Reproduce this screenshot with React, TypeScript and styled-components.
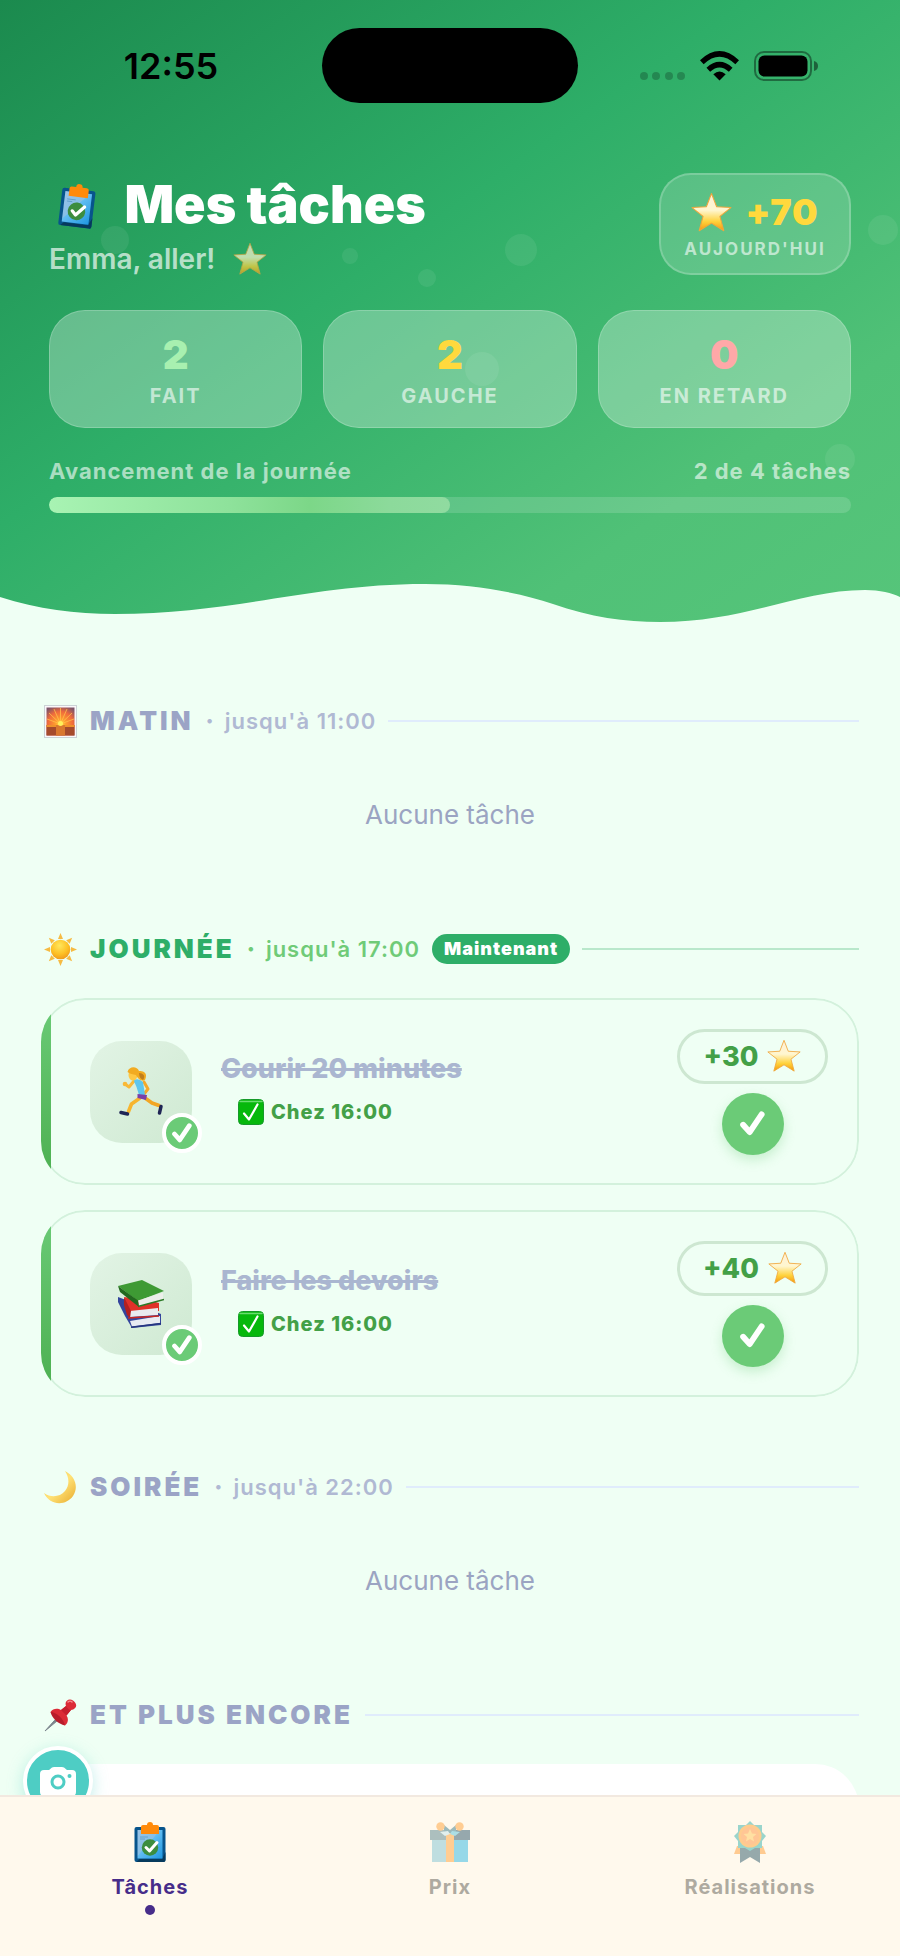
import React from "react";
import styled, { createGlobalStyle } from "styled-components";

const GlobalStyle = createGlobalStyle`
  * { box-sizing: border-box; }
  body { margin: 0; background: #effff4; font-family: Inter, "Liberation Sans", sans-serif; }
  button { font: inherit; border: 0; padding: 0; background: none; cursor: pointer; }
  h1, h2, h3, p { margin: 0; }
  svg { display: block; flex: none; }
`;

/* ---------- layout ---------- */

const Screen = styled.div`
  height: 100vh;
  display: flex;
  flex-direction: column;
  background: #effff4;
`;

const Viewport = styled.div`
  position: relative;
  flex: 1;
  min-height: 0;
  overflow: hidden;
`;

const Scroll = styled.div`
  height: 100%;
  overflow-y: auto;
  scrollbar-width: none;
`;

const Header = styled.header`
  position: relative;
  background: linear-gradient(145deg, #1b8a4e 0%, #2eae68 42%, #50c177 78%, #56c57a 100%);
`;

const Bubble = styled.span<{ $x: number; $y: number; $r: number }>`
  position: absolute;
  left: ${(p) => p.$x / 9}%;
  top: ${(p) => p.$y - p.$r}px;
  width: ${(p) => p.$r * 2}px;
  height: ${(p) => p.$r * 2}px;
  margin-left: ${(p) => -p.$r}px;
  border-radius: 50%;
  background: rgba(255, 255, 255, 0.07);
`;

const StatusBar = styled.div`
  display: grid;
  grid-template-columns: 1fr 256px 1fr;
  align-items: center;
  justify-items: center;
  padding: 28px 20px 0;
`;

const Clock = styled.time`
  font-size: 36px;
  line-height: 40px;
  font-weight: 600;
  color: #000;
`;

const Island = styled.div`
  width: 256px;
  height: 75px;
  border-radius: 38px;
  background: #000;
`;

const StatusIcons = styled.div`
  display: flex;
  align-items: center;
  gap: 15px;
`;

const HeaderBody = styled.div`
  position: relative;
  padding: 70px 49px 69px;
`;

const TitleRow = styled.div`
  display: flex;
  justify-content: space-between;
  align-items: flex-start;
  margin-bottom: 29px;
`;

const Title = styled.h1`
  display: flex;
  align-items: center;
  gap: 30px;
  padding-left: 11px;
  font-size: 52px;
  line-height: 64px;
  font-weight: 900;
  color: #fff;
`;

const Greeting = styled.p`
  display: flex;
  align-items: center;
  gap: 18px;
  font-size: 28px;
  line-height: 44px;
  font-weight: 600;
  color: rgba(255, 255, 255, 0.68);
`;

const Faded = styled.span<{ $opacity: number }>`
  display: flex;
  opacity: ${(p) => p.$opacity};
`;

const TodayBadge = styled.div`
  min-width: 192px;
  padding: 16px 16px 8px;
  border: 2px solid rgba(255, 255, 255, 0.2);
  border-radius: 32px;
  background: rgba(255, 255, 255, 0.17);
  text-align: center;
`;

const TodayPoints = styled.div`
  display: flex;
  align-items: center;
  justify-content: center;
  gap: 13px;
  font-size: 36px;
  line-height: 42px;
  font-weight: 900;
  letter-spacing: 1px;
  color: #ffd93d;
`;

const TodayLabel = styled.div`
  font-size: 17px;
  line-height: 32px;
  font-weight: 700;
  letter-spacing: 2px;
  text-transform: uppercase;
  color: rgba(255, 255, 255, 0.6);
`;

const Stats = styled.div`
  display: grid;
  grid-template-columns: repeat(3, 1fr);
  gap: 21px;
  margin-bottom: 28px;
`;

const Stat = styled.div`
  padding: 20px 8px 14px;
  border: 1px solid rgba(255, 255, 255, 0.2);
  border-radius: 36px;
  background: rgba(255, 255, 255, 0.29);
  text-align: center;
`;

const StatValue = styled.div<{ $color: string }>`
  font-size: 40px;
  line-height: 48px;
  font-weight: 900;
  color: ${(p) => p.$color};
`;

const StatLabel = styled.div`
  font-size: 20px;
  line-height: 34px;
  font-weight: 700;
  letter-spacing: 2px;
  text-transform: uppercase;
  color: rgba(255, 255, 255, 0.6);
`;

const ProgressText = styled.div`
  display: flex;
  justify-content: space-between;
  margin-bottom: 11px;
  font-size: 22px;
  line-height: 30px;
  font-weight: 700;
  letter-spacing: 1px;
  color: rgba(255, 255, 255, 0.6);
`;

const Track = styled.div`
  height: 16px;
  border-radius: 8px;
  background: rgba(255, 255, 255, 0.15);
  overflow: hidden;
`;

const Fill = styled.div`
  height: 100%;
  border-radius: 8px;
  background: linear-gradient(90deg, #a8f3b3 0%, #8ee29b 45%, #7cd788 65%, #8cda9b 85%, #90dba0 100%);
`;

const Wave = styled.svg`
  position: relative;
  width: 100%;
  height: 40px;
`;

const Main = styled.main`
  display: flex;
  flex-direction: column;
  gap: 70px;
  padding: 79px 41px 70px;
`;

const SectionHead = styled.div<{ $active?: boolean }>`
  display: flex;
  align-items: center;
  height: 40px;
  margin-bottom: 29px;
  color: ${(p) => (p.$active ? "#2eae68" : "#9ba4c6")};
  &::after {
    content: "";
    flex: 1;
    height: 2px;
    margin-left: 12px;
    background: ${(p) => (p.$active ? "#b9e8cb" : "#e0ecfc")};
  }
`;

const SectionIcon = styled.span`
  display: flex;
  justify-content: center;
  width: 38px;
  margin-right: 11px;
`;

const SectionTitle = styled.h2`
  font-size: 26px;
  line-height: 40px;
  font-weight: 900;
  letter-spacing: 3px;
  text-transform: uppercase;
`;

const Until = styled.span<{ $active?: boolean }>`
  display: flex;
  gap: 10px;
  margin-left: 12px;
  font-size: 22px;
  line-height: 40px;
  font-weight: 600;
  letter-spacing: 1px;
  color: ${(p) => (p.$active ? "#6fcb78" : "#b0b9d3")};
  &::before {
    content: "·";
    font-weight: 900;
  }
`;

const NowPill = styled.span`
  margin-left: 12px;
  padding: 0 12px;
  border-radius: 15px;
  background: #2eae68;
  color: #fff;
  font-size: 18px;
  line-height: 30px;
  font-weight: 900;
  letter-spacing: 1px;
`;

const Empty = styled.p`
  padding: 29px 0 28px;
  font-size: 26px;
  line-height: 32px;
  text-align: center;
  color: #9ba4c2;
`;

const Cards = styled.div`
  display: flex;
  flex-direction: column;
  gap: 25px;
`;

const Card = styled.article`
  position: relative;
  display: flex;
  align-items: center;
  min-height: 187px;
  padding: 29px 31px 29px 49px;
  border-radius: 44px;
  overflow: hidden;
  &::before {
    content: "";
    position: absolute;
    inset: 0;
    border: 2px solid #d3f1dc;
    border-radius: 44px;
    pointer-events: none;
  }
  &::after {
    content: "";
    position: absolute;
    inset: 0 auto 0 0;
    width: 10px;
    background: linear-gradient(#6bcb77, #4caf50);
  }
`;

const BlankCard = styled.div`
  min-height: 187px;
  border-radius: 44px;
  background: #fff;
`;

const Tile = styled.div`
  position: relative;
  display: flex;
  align-items: center;
  justify-content: center;
  width: 102px;
  height: 102px;
  margin-right: 29px;
  border-radius: 32px;
  background: linear-gradient(135deg, #e2f4e5, #cfe9d2);
`;

const DoneDot = styled.span`
  position: absolute;
  right: -10px;
  bottom: -10px;
  display: flex;
  align-items: center;
  justify-content: center;
  width: 40px;
  height: 40px;
  border: 4px solid #fff;
  border-radius: 50%;
  background: #6bcb77;
`;

const CardText = styled.div`
  flex: 1;
`;

const TaskTitle = styled.h3`
  font-size: 27px;
  line-height: 40px;
  font-weight: 800;
  color: #aab6d0;
  text-decoration: line-through;
  text-decoration-thickness: 3px;
`;

const TaskTime = styled.p`
  display: flex;
  align-items: center;
  gap: 7px;
  padding-left: 17px;
  font-size: 20px;
  line-height: 46px;
  font-weight: 800;
  letter-spacing: 1px;
  color: #43a047;
`;

const CardSide = styled.div`
  display: flex;
  flex-direction: column;
  align-items: center;
  gap: 9px;
`;

const Points = styled.div`
  display: flex;
  align-items: center;
  justify-content: center;
  gap: 9px;
  min-width: 151px;
  height: 55px;
  border: 3px solid #cde7d1;
  border-radius: 28px;
  font-size: 27px;
  font-weight: 800;
  color: #43a047;
`;

const CheckButton = styled.button`
  display: flex;
  align-items: center;
  justify-content: center;
  width: 62px;
  height: 62px;
  border-radius: 50%;
  background: #6bcb77;
  box-shadow: 0 5px 12px rgba(107, 203, 119, 0.3);
`;

const CameraButton = styled.button`
  position: absolute;
  left: 23px;
  bottom: -21px;
  display: flex;
  align-items: center;
  justify-content: center;
  width: 70px;
  height: 70px;
  && { border: 4px solid #fff; }
  border-radius: 50%;
  background: #4ecdc4;
  box-shadow: 0 4px 16px rgba(78, 205, 196, 0.35);
`;

const TabBar = styled.nav`
  display: grid;
  grid-template-columns: repeat(3, 1fr);
  border-top: 2px solid #f2e9e0;
  background: #fff9ed;
`;

const Tab = styled.button<{ $active?: boolean }>`
  display: flex;
  flex-direction: column;
  align-items: center;
  && { padding: 22px 0 41px; }
  font-size: 20px;
  line-height: 28px;
  font-weight: 700;
  letter-spacing: 1px;
  color: ${(p) => (p.$active ? "#472d8a" : "#aeaaa0")};
  &::after {
    content: "";
    width: 10px;
    height: 10px;
    margin-top: 4px;
    border-radius: 50%;
    background: ${(p) => (p.$active ? "#472d8a" : "transparent")};
  }
`;

const TabIcon = styled.span<{ $active?: boolean }>`
  display: flex;
  align-items: center;
  height: 46px;
  margin-bottom: 8px;
  opacity: ${(p) => (p.$active ? 1 : 0.5)};
`;

/* ---------- drawings ---------- */

const StarIcon = ({ size, id }: { size: number; id: string }) => (
  <svg width={size} height={size} viewBox="0 0 40 40" aria-hidden="true">
    <defs>
      <linearGradient id={id} x1="0" y1="0" x2="0" y2="1">
        <stop offset="0" stopColor="#fff0d8" />
        <stop offset="0.45" stopColor="#fff6cf" />
        <stop offset="0.75" stopColor="#ffd23c" />
        <stop offset="1" stopColor="#f59a0c" />
      </linearGradient>
    </defs>
    <path
      d="M20 1.5 25 14.4 39 15.2 28.2 23.8 32 37.8 20 30.4 8 37.8 11.8 23.8 1 15.2 15 14.4Z"
      fill={`url(#${id})`}
      stroke="#f0a63c"
      strokeWidth="1"
      strokeLinejoin="round"
    />
  </svg>
);

const ClipboardIcon = ({ id, height, tilt = 0 }: { id: string; height: number; tilt?: number }) => (
  <svg width={height * 0.8} height={height} viewBox="0 0 32 40" overflow="visible" aria-hidden="true">
    <defs>
      <linearGradient id={id} x1="0" y1="0" x2="1" y2="1">
        <stop offset="0" stopColor="#9cc4e6" />
        <stop offset="0.45" stopColor="#86bfe8" />
        <stop offset="0.46" stopColor="#62bdf2" />
        <stop offset="1" stopColor="#1f97e0" />
      </linearGradient>
    </defs>
    <g transform={`rotate(${tilt} 16 20)`}>
      <rect x="0.5" y="5" width="31" height="35" rx="2" fill="#07548c" />
      <path d="M31.5 30v8a2 2 0 0 1-2 2H2.5l3-3H28Z" fill="#063a5c" />
      <path d="M3.500 8H28.500V36.500H3.500Z" fill={`url(#${id})`} />
      <path d="M6 15h8M6 17h5" stroke="#5b9cc9" strokeWidth="0.8" />
      <path d="M7 12V5a2 2 0 0 1 2-2h4a3 3 0 0 1 6 0h4a2 2 0 0 1 2 2v7Z" fill="#ff8a0a" />
      <circle cx="16" cy="25.500" r="8.200" fill="#3c8d3f" />
      <path d="m12 25.500 3.500 3.500 7.500-8.500" fill="none" stroke="#fff" strokeWidth="3" strokeLinecap="round" strokeLinejoin="round" />
    </g>
  </svg>
);

const CheckIcon = ({ size }: { size: number }) => (
  <svg width={size} height={size} viewBox="0 0 24 24" aria-hidden="true">
    <path d="M3 13.2 9.300 20.300 20.800 3.200" fill="none" stroke="#fff" strokeWidth="5.600" strokeLinecap="round" strokeLinejoin="round" />
  </svg>
);

const SunriseIcon = () => (
  <svg width="33" height="33" viewBox="0 0 33 33" aria-hidden="true">
    <defs>
      <radialGradient id="dawn" cx="0.5" cy="0.6" r="0.7">
        <stop offset="0" stopColor="#ffe34a" />
        <stop offset="0.25" stopColor="#ff9f2e" />
        <stop offset="0.65" stopColor="#ef6a3c" />
        <stop offset="1" stopColor="#7d5468" />
      </radialGradient>
    </defs>
    <rect x="0.5" y="0.5" width="32" height="32" fill="#fbf7fa" stroke="#cbd3d6" />
    <rect x="2.5" y="2.5" width="28" height="28" fill="url(#dawn)" />
    <path d="M16.5 19 5 8M16.5 19 10 4M16.5 19V3M16.5 19 23 4M16.5 19 28 8M16.5 19 3 14M16.5 19l13.5-5" stroke="#ffc04a" strokeWidth="0.8" />
    <rect x="2.5" y="20" width="28" height="10.5" fill="#a54b2c" />
    <rect x="2.5" y="20" width="28" height="2" fill="#ef922c" />
    <path d="M12 20h9v10.5h-9Z" fill="#d9782e" />
    <circle cx="16.5" cy="18.5" r="2.5" fill="#fff05c" />
  </svg>
);

const SunIcon = () => (
  <svg width="33" height="33" viewBox="0 0 33 33" aria-hidden="true">
    <defs>
      <radialGradient id="sun" cx="0.45" cy="0.3" r="0.75">
        <stop offset="0" stopColor="#ffe75c" />
        <stop offset="0.6" stopColor="#fdbf24" />
        <stop offset="1" stopColor="#ee941b" />
      </radialGradient>
    </defs>
    {[0, 45, 90, 135, 180, 225, 270, 315].map((a) => (
      <path key={a} d="M16.5 0 19 6H14Z" fill="#f6bb43" transform={`rotate(${a} 16.5 16.5)`} />
    ))}
    <circle cx="16.5" cy="16.5" r="9.8" fill="url(#sun)" />
  </svg>
);

const MoonIcon = () => (
  <svg width="34" height="34" viewBox="0 0 34 34" aria-hidden="true">
    <defs>
      <linearGradient id="moon" x1="0" y1="0" x2="1" y2="1">
        <stop offset="0" stopColor="#f3c63f" />
        <stop offset="0.5" stopColor="#ffe277" />
        <stop offset="1" stopColor="#e8ab2c" />
      </linearGradient>
    </defs>
    <path d="M22 1C32 6 36 17 30 26 23 36 7 36 1 23 8 28 17 27 22 21 27 15 26 7 22 1Z" fill="url(#moon)" />
  </svg>
);

const PinIcon = () => (
  <svg width="33" height="33" viewBox="0 0 33 33" aria-hidden="true">
    <path d="M1 32 14 17.5l2 2Z" fill="#7c858d" stroke="#7c858d" />
    <path d="M6.5 13C9 9 14 9 17 11L22 7C20 2 25-1 29 1.5 34 5 33 10 27 11L22.5 16.5C25 20 24 24 21 26.5Z" fill="#dc2b37" />
    <path d="M6.5 13C12 13 20 20 21 26.5 14 25 8 19 6.5 13Z" fill="#b91c2b" />
    <path d="M22 7C23 9 25 11 27 11L22.5 16.5 17 11Z" fill="#c51f2e" />
    <path d="M24 3c1-1 3-1 4 0" stroke="#f78a8f" strokeWidth="1.5" fill="none" strokeLinecap="round" />
  </svg>
);

const RunnerIcon = () => (
  <svg width="44" height="49" viewBox="0 0 44 49" aria-hidden="true">
    <g fill="none" strokeLinecap="round" strokeLinejoin="round">
      <path d="M21 31 12.5 37 9.500 44.500" stroke="#f7b52f" strokeWidth="3.600" />
      <path d="M26 31 33 36 40 38.500" stroke="#f2a625" strokeWidth="3.600" />
      <path d="M15 14 10 20 6 17" stroke="#f9b937" strokeWidth="3" />
      <path d="M25 15 29 22 25 27" stroke="#f5a92b" strokeWidth="3" />
      <path d="M2 45.500 8.500 47" stroke="#1f2555" strokeWidth="3.400" />
      <path d="M42 39.500 40.500 46" stroke="#1f2555" strokeWidth="3.400" />
    </g>
    <path d="M14.500 13Q20 11 24 15L26 28H20Q18 20 14.500 13Z" fill="#5ec6ee" />
    <path d="M18.500 27 28 28 27 33 18.500 31Z" fill="#7a3fa8" />
    <ellipse cx="14" cy="8" rx="4.500" ry="5.500" fill="#ffc845" />
    <path d="M8.500 5C10-1 18-1 20 4 25 4 29 6 26 13 23 15 19 12 17 8 14 7 11 7 8.500 5Z" fill="#f2ab22" />
    <path d="M20 6C24 6 27 9 24 13 22 12 20 10 20 6Z" fill="#c07d1c" />
    <circle cx="6" cy="17" r="2.3" fill="#f9b937" />
  </svg>
);

const BooksIcon = () => (
  <svg width="46" height="48" viewBox="0 0 46 48" aria-hidden="true">
    <path d="M0 17 8 20 43 34V45L14 48 7 36 0 22Z" fill="#34459c" />
    <path d="M12 41 42 36V43L14 46.500Z" fill="#e8eaf2" />
    <path d="M6 17 12 33 41 31V23L30 20Z" fill="#e03129" />
    <path d="M12 31 40 28V35L12 37Z" fill="#e9ebef" />
    <path d="M6 17 13 31 12 38 9 35 6 25Z" fill="#b32020" />
    <path d="M10 38 41 36" stroke="#c92722" strokeWidth="1.5" />
    <path d="M0 6 24 0 46 11 20 21Z" fill="#3e9a34" />
    <path d="M20 20.500 45 12.500V19L21 26.500Z" fill="#eceeea" />
    <path d="M0 6 20 20.500 21 27 2 12Z" fill="#23691f" />
    <path d="M20 26.500 46 19.500" stroke="#2c7a27" strokeWidth="1.5" />
    <path d="M13 47.200 43 43.500" stroke="#26357f" strokeWidth="1.5" />
  </svg>
);

const CheckBoxIcon = () => (
  <svg width="26" height="26" viewBox="0 0 26 26" aria-hidden="true">
    <rect x="0.5" y="0.5" width="25" height="25" rx="4" fill="#06b80c" stroke="#169a2a" />
    <path d="M2 2.5H24" stroke="#6bdc70" strokeWidth="1.5" strokeLinecap="round" />
    <path d="m6 14.500 5 6L19.500 5.500" fill="none" stroke="#fff" strokeWidth="2.2" strokeLinecap="round" strokeLinejoin="round" />
  </svg>
);

const CameraIcon = () => (
  <svg width="36" height="30" viewBox="0 0 36 30" aria-hidden="true">
    <path d="M4 4H9L12 1.5Q13 1 14 1H22Q23 1 24 1.5L27 4H32a4 4 0 0 1 4 4V26a4 4 0 0 1-4 4H4a4 4 0 0 1-4-4V8A4 4 0 0 1 4 4Z" fill="#fff" />
    <circle cx="18" cy="16" r="6" fill="none" stroke="#4ecdc4" strokeWidth="3" />
    <circle cx="29.5" cy="10" r="2" fill="#4ecdc4" />
  </svg>
);

const GiftIcon = () => (
  <svg width="40" height="40" viewBox="0 0 40 40" aria-hidden="true">
    <path d="M2 16H38V40H2Z" fill="#80c4d5" />
    <path d="M23 16H38V40H23Z" fill="#2fb8e4" />
    <path d="M0 8H40V18H0Z" fill="#2f5a6e" />
    <path d="M0 8H18V18H0Z" fill="#5c8791" />
    <path d="M14 3 20 8 26 3V11H14Z" fill="#3b7d8e" />
    <path d="M16 11H24V40H16Z" fill="#ffa339" />
    <circle cx="10.5" cy="4.500" r="4.200" fill="#ffa23a" />
    <circle cx="29.5" cy="4.500" r="4.200" fill="#ffa23a" />
    <path d="m10 10 8-1 2 3-5 2Z" fill="#c5e6ee" />
    <path d="m30 10-8-1-2 3 5 2Z" fill="#5cc5df" />
  </svg>
);

const MedalIcon = () => (
  <svg width="32" height="42" viewBox="0 0 32 42" aria-hidden="true">
    <path d="M3 25 0 33H6V25ZM29 25l3 8H26V25Z" fill="#ff9f38" />
    <path d="M6 24H26V42L16 36 6 42Z" fill="#2f5b6c" />
    <path d="M16 0 20 4H28V11L32 15 28 20V27H21L16 30 11 27H4V20L0 15 4 11V4H12Z" fill="#36b3ad" />
    <circle cx="16" cy="15" r="11.5" fill="#ffa030" />
    <circle cx="16" cy="15" r="9" fill="#ff9440" />
    <path d="m16 8 2 4.500 4.500.5-3.500 3 1 4.500-4-2.500-4 2.500 1-4.500-3.500-3L14 12.500Z" fill="#ffc85a" />
  </svg>
);

const Reception = () => (
  <svg width="45" height="30" viewBox="0 0 45 30" aria-hidden="true">
    {[4, 16, 29, 41].map((x) => (
      <circle key={x} cx={x} cy="25" r="4" fill="#000" opacity="0.22" />
    ))}
  </svg>
);

const WifiIcon = () => (
  <svg width="39" height="30" viewBox="0 0 39 30" aria-hidden="true">
    <path d="M19.5 29.500 13.300 23.300Q19.500 17.500 25.700 23.300Z" fill="#000" />
    <path d="M8.300 18.700Q19.500 8.500 30.700 18.700" fill="none" stroke="#000" strokeWidth="5.400" />
    <path d="M1.800 11.200Q19.500-5.500 37.200 11.200" fill="none" stroke="#000" strokeWidth="5.400" />
  </svg>
);

const BatteryIcon = () => (
  <svg width="64" height="30" viewBox="0 0 64 30" aria-hidden="true">
    <rect x="1" y="1" width="56" height="28" rx="9" fill="none" stroke="#000" strokeOpacity="0.4" strokeWidth="2" />
    <rect x="4.500" y="4.500" width="49" height="21" rx="6" fill="#000" />
    <path d="M60 10Q64 11 64 15T60 20Z" fill="#000" opacity="0.45" />
  </svg>
);

/* ---------- data and parts ---------- */

const bubbles = [
  [115, 240, 14], [350, 256, 8], [427, 278, 9], [521, 250, 16],
  [883, 230, 15], [482, 369, 17], [840, 459, 15],
];

const stats = [
  { value: 2, label: "Fait", color: "#a8f0b0" },
  { value: 2, label: "Gauche", color: "#ffd93d" },
  { value: 0, label: "En retard", color: "#ffa8a8" },
];

const tasks = [
  { title: "Courir 20 minutes", time: "16:00", points: 30, icon: <RunnerIcon /> },
  { title: "Faire les devoirs", time: "16:00", points: 40, icon: <BooksIcon /> },
];

type SectionProps = {
  icon: React.ReactNode;
  title: string;
  until?: string;
  active?: boolean;
  children: React.ReactNode;
};

const Section = ({ icon, title, until, active, children }: SectionProps) => (
  <section>
    <SectionHead $active={active}>
      <SectionIcon>{icon}</SectionIcon>
      <SectionTitle>{title}</SectionTitle>
      {until && (
        <Until $active={active}>
          <span>jusqu'à {until}</span>
        </Until>
      )}
      {active && <NowPill>Maintenant</NowPill>}
    </SectionHead>
    {children}
  </section>
);

export default function App() {
  const done = 2;
  const total = 4;
  return (
    <Screen>
      <GlobalStyle />
      <Viewport>
        <Scroll>
          <Header>
            {bubbles.map(([x, y, r]) => (
              <Bubble key={x} $x={x} $y={y} $r={r} />
            ))}
            <StatusBar>
              <Clock>12:55</Clock>
              <Island />
              <StatusIcons>
                <Reception />
                <WifiIcon />
                <BatteryIcon />
              </StatusIcons>
            </StatusBar>
            <HeaderBody>
              <TitleRow>
                <div>
                  <Title>
                    <ClipboardIcon id="clipHead" height={43} tilt={7} />
                    Mes tâches
                  </Title>
                  <Greeting>
                    Emma, aller!
                    <Faded $opacity={0.7}><StarIcon size={34} id="starHello" /></Faded>
                  </Greeting>
                </div>
                <TodayBadge>
                  <TodayPoints>
                    <StarIcon size={41} id="starToday" />
                    +70
                  </TodayPoints>
                  <TodayLabel>Aujourd'hui</TodayLabel>
                </TodayBadge>
              </TitleRow>
              <Stats>
                {stats.map((s) => (
                  <Stat key={s.label}>
                    <StatValue $color={s.color}>{s.value}</StatValue>
                    <StatLabel>{s.label}</StatLabel>
                  </Stat>
                ))}
              </Stats>
              <ProgressText>
                <span id="progress-label">Avancement de la journée</span>
                <span>{done} de {total} tâches</span>
              </ProgressText>
              <Track role="progressbar" aria-labelledby="progress-label" aria-valuenow={done} aria-valuemax={total}>
                <Fill style={{ width: `${(done / total) * 100}%` }} />
              </Track>
            </HeaderBody>
            <Wave viewBox="0 582 900 40" preserveAspectRatio="none" aria-hidden="true">
              <path
                d="M0 597C38 609 75 614 115 614C235 614 310 584 425 584C475 584 520 593 553 604C590 617 625 622 660 622C745 622 800 590 865 590C880 590 892 593 900 597V623H0Z"
                fill="#effff4"
              />
            </Wave>
          </Header>
          <Main>
            <Section icon={<SunriseIcon />} title="Matin" until="11:00">
              <Empty>Aucune tâche</Empty>
            </Section>
            <Section icon={<SunIcon />} title="Journée" until="17:00" active>
              <Cards>
                {tasks.map((t) => (
                  <Card key={t.title}>
                    <Tile>
                      {t.icon}
                      <DoneDot><CheckIcon size={20} /></DoneDot>
                    </Tile>
                    <CardText>
                      <TaskTitle>{t.title}</TaskTitle>
                      <TaskTime><CheckBoxIcon />Chez {t.time}</TaskTime>
                    </CardText>
                    <CardSide>
                      <Points>
                        +{t.points}
                        <StarIcon size={34} id={`star${t.points}`} />
                      </Points>
                      <CheckButton aria-label={`${t.title} : fait`}><CheckIcon size={25} /></CheckButton>
                    </CardSide>
                  </Card>
                ))}
              </Cards>
            </Section>
            <Section icon={<MoonIcon />} title="Soirée" until="22:00">
              <Empty>Aucune tâche</Empty>
            </Section>
            <Section icon={<PinIcon />} title="Et plus encore">
              <BlankCard />
            </Section>
          </Main>
        </Scroll>
        <CameraButton aria-label="Prendre une photo"><CameraIcon /></CameraButton>
      </Viewport>
      <TabBar>
        <Tab $active aria-current="page">
          <TabIcon $active><ClipboardIcon id="clipTab" height={40} /></TabIcon>
          Tâches
        </Tab>
        <Tab>
          <TabIcon><GiftIcon /></TabIcon>
          Prix
        </Tab>
        <Tab>
          <TabIcon><MedalIcon /></TabIcon>
          Réalisations
        </Tab>
      </TabBar>
    </Screen>
  );
}
